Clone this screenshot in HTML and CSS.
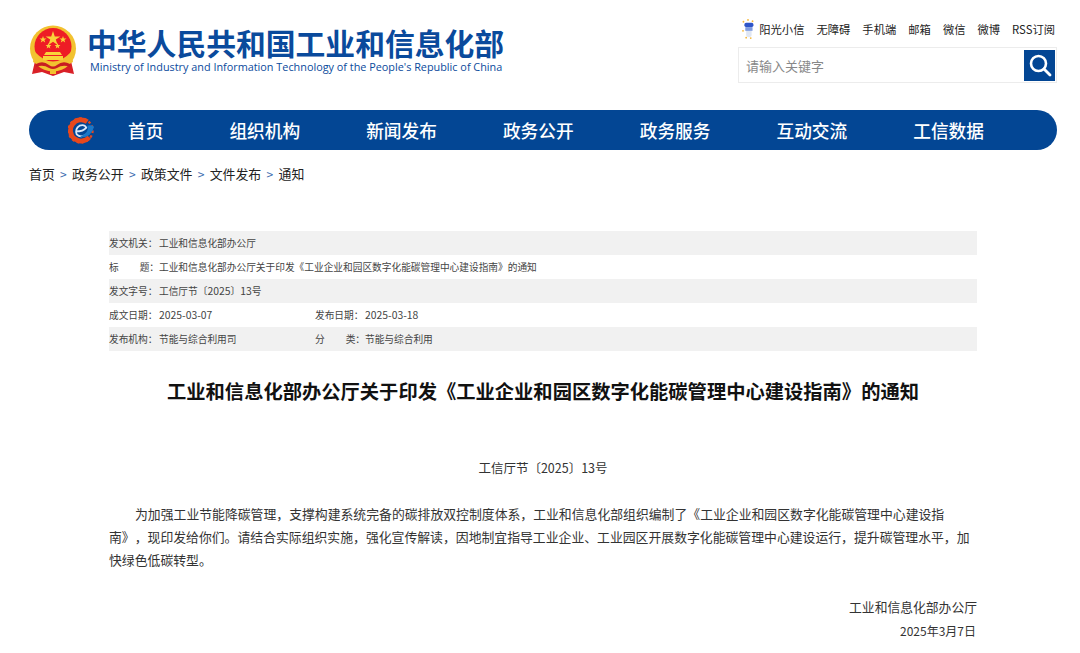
FILE: index.html
```html
<!DOCTYPE html>
<html lang="zh-CN">
<head>
<meta charset="utf-8">
<title>工业和信息化部办公厅关于印发《工业企业和园区数字化能碳管理中心建设指南》的通知</title>
<link rel="stylesheet" href="styles.css">
</head>
<body>
<header class="top">
  <div class="brand">
    <svg class="emblem" viewBox="0 0 48 52" width="48" height="52" aria-hidden="true">
      <path d="M6 36 L3 49 L13 47 L24 51 L35 47 L45 49 L42 36 Z" fill="#d92027"/>
      <circle cx="24" cy="23.5" r="23" fill="#f2c230"/>
      <circle cx="24" cy="21.5" r="18.5" fill="#ee1c25"/>
      <path d="M6 27 Q24 46 42 27 L44 37 Q24 49 4 37 Z" fill="#f2c230"/>
      <polygon fill="#f9d33a" points="24,6 25.8,11.4 31.4,11.4 26.8,14.6 28.6,20 24,16.7 19.4,20 21.2,14.6 16.6,11.4 22.2,11.4"/>
      <polygon fill="#f9d33a" points="14,11 14.9,13.4 17.5,13.5 15.4,15 16.2,17.5 14,16 11.8,17.5 12.6,15 10.5,13.5 13.1,13.4"/>
      <polygon fill="#f9d33a" points="34,11 34.9,13.4 37.5,13.5 35.4,15 36.2,17.5 34,16 31.8,17.5 32.6,15 30.5,13.5 33.1,13.4"/>
      <polygon fill="#f9d33a" points="19.5,18 20.3,20 22.4,20.1 20.8,21.4 21.3,23.5 19.5,22.3 17.7,23.5 18.2,21.4 16.6,20.1 18.7,20"/>
      <polygon fill="#f9d33a" points="28.5,18 29.3,20 31.4,20.1 29.8,21.4 30.3,23.5 28.5,22.3 26.7,23.5 27.2,21.4 25.6,20.1 27.7,20"/>
      <path d="M17 27 H31 L33 30 H15 Z M14 31 H34 V35 H14 Z" fill="#f9d33a"/>
      <path d="M7 39 Q14 35 20 40 Q24 43 28 40 Q34 35 41 39 L41 42 Q34 39 28 43 Q24 45 20 43 Q14 39 7 42 Z" fill="#c81d22"/>
      <rect x="21" y="44" width="6" height="5" fill="#f2c230"/>
    </svg>
    <div class="brand-text">
      <div class="brand-cn">中华人民共和国工业和信息化部</div>
      <div class="brand-en">Ministry of Industry and Information Technology of the People's Republic of China</div>
    </div>
  </div>
  <div class="tools">
    <ul class="links">
      <li class="sun">
        <svg viewBox="0 0 14 22" width="14" height="20" aria-hidden="true">
          <rect x="5" y="5" width="6" height="15" rx="3" fill="#dfe6f3"/>
          <rect x="3" y="4" width="10" height="5" rx="2" fill="#2f55c8"/>
          <path d="M4 9 H12 V13 H4 Z" fill="#7f9be0"/>
          <circle cx="2" cy="3" r="1" fill="#f5b73a"/>
          <circle cx="7" cy="1" r="1" fill="#f5b73a"/>
          <circle cx="12" cy="2.5" r="1" fill="#f5b73a"/>
          <circle cx="1.5" cy="13" r="1" fill="#f5b73a"/>
          <circle cx="5" cy="20.5" r="1" fill="#f5b73a"/>
          <circle cx="10" cy="21" r="1" fill="#f5b73a"/>
        </svg>
        <a>阳光小信</a>
      </li>
      <li><a>无障碍</a></li>
      <li><a>手机端</a></li>
      <li><a>邮箱</a></li>
      <li><a>微信</a></li>
      <li><a>微博</a></li>
      <li><a>RSS订阅</a></li>
    </ul>
    <div class="search">
      <span class="placeholder">请输入关键字</span>
      <span class="search-btn">
        <svg viewBox="0 0 24 24" width="24" height="24" aria-hidden="true">
          <circle cx="10.5" cy="10.5" r="7.5" fill="none" stroke="#fff" stroke-width="2.6"/>
          <path d="M16 16 L22 22" stroke="#fff" stroke-width="2.8" stroke-linecap="round"/>
        </svg>
      </span>
    </div>
  </div>
</header>

<nav class="nav">
  <svg class="nav-logo" viewBox="0 0 28 28" width="27" height="27" aria-hidden="true">
    <path d="M20 5 A11 11 0 1 0 22 21" fill="none" stroke="#e8481c" stroke-width="5"/>
    <circle cx="13" cy="14" r="12.5" fill="none" stroke="#e8481c" stroke-width="2.4" stroke-dasharray="2.6 2.6"/>
    <path d="M8 15 Q16 15 19 11 Q17 7 12 9 Q7 12 9 18 Q13 22 20 18" fill="none" stroke="#dbe8f8" stroke-width="1.8"/>
    <path d="M12 21 Q24 22 27 10 Q24 8 20 9 Q23 15 12 21 Z" fill="#1a78c8"/>
  </svg>
  <a>首页</a>
  <a>组织机构</a>
  <a>新闻发布</a>
  <a>政务公开</a>
  <a>政务服务</a>
  <a>互动交流</a>
  <a>工信数据</a>
</nav>

<div class="crumbs">
  <a>首页</a><i>&gt;</i><a>政务公开</a><i>&gt;</i><a>政策文件</a><i>&gt;</i><a>文件发布</a><i>&gt;</i><a>通知</a>
</div>

<main class="doc">
  <div class="meta">
    <div class="row"><span class="cell wide"><b>发文机关：</b>工业和信息化部办公厅</span></div>
    <div class="row"><span class="cell wide"><b class="spread"><em>标</em><em>题：</em></b>工业和信息化部办公厅关于印发《工业企业和园区数字化能碳管理中心建设指南》的通知</span></div>
    <div class="row"><span class="cell wide"><b>发文字号：</b><span>工信厅节〔<span class="num">2025</span>〕<span class="num">13</span>号</span></span></div>
    <div class="row"><span class="cell"><b>成文日期：</b><span class="num">2025-03-07</span></span><span class="cell"><b>发布日期：</b><span class="num">2025-03-18</span></span></div>
    <div class="row"><span class="cell"><b>发布机构：</b>节能与综合利用司</span><span class="cell"><b class="spread"><em>分</em><em>类：</em></b>节能与综合利用</span></div>
  </div>
  <h1 class="title">工业和信息化部办公厅关于印发《工业企业和园区数字化能碳管理中心建设指南》的通知</h1>
  <p class="docno">工信厅节〔2025〕13号</p>
  <p class="body">为加强工业节能降碳管理，支撑构建系统完备的碳排放双控制度体系，工业和信息化部组织编制了《工业企业和园区数字化能碳管理中心建设指南》，现印发给你们。请结合实际组织实施，强化宣传解读，因地制宜指导工业企业、工业园区开展数字化能碳管理中心建设运行，提升碳管理水平，加快绿色低碳转型。</p>
  <p class="sign">工业和信息化部办公厅</p>
  <p class="date">2025年3月7日</p>
</main>
</body>
</html>
```
FILE: styles.css
```css
* { box-sizing: border-box; }
html, body { margin: 0; padding: 0; }
body {
  width: 1080px;
  height: 653px;
  overflow: hidden;
  background: #fff;
  color: #222;
  font-family: "Noto Sans CJK SC", "Noto Sans", sans-serif;
}
.top {
  display: flex;
  justify-content: space-between;
  height: 110px;
  padding: 19px 25px 0 29px;
}
.brand { display: flex; align-items: flex-start; padding-top: 6px; }
.emblem { flex: none; }
.brand-text { margin-left: 10px; }
.brand-cn {
  height: 34px;
  font-size: 29.8px;
  line-height: 34px;
  font-weight: 700;
  color: #0a4a9c;
  white-space: nowrap;
}
.brand-en {
  margin: 0 0 0 3px;
  font-family: "Open Sans", "Noto Sans", sans-serif;
  font-size: 10.85px;
  line-height: 16px;
  color: #0a4a9c;
  white-space: nowrap;
}
.tools { display: flex; flex-direction: column; align-items: flex-end; }
.links {
  display: flex;
  align-items: center;
  gap: 12px;
  margin: 0;
  padding: 0;
  height: 20px;
  list-style: none;
  font-size: 11.3px;
  line-height: 20px;
  color: #222;
}
.links li { display: flex; align-items: center; white-space: nowrap; }
.sun svg { margin-right: 4px; }
.search {
  display: flex;
  justify-content: space-between;
  align-items: center;
  width: 319px;
  height: 36px;
  margin: 8px -2px 0 0;
  padding: 0 1px 0 7px;
  border: 1px solid #ececec;
}
.placeholder { font-size: 13px; color: #888; }
.search-btn {
  display: flex;
  align-items: center;
  justify-content: center;
  width: 31px;
  height: 31px;
  background: #034694;
}
.nav {
  display: flex;
  align-items: center;
  gap: 66px;
  width: 1028px;
  height: 40px;
  margin-left: 29px;
  padding-left: 39px;
  border-radius: 20px;
  background: #034694;
  color: #fff;
  font-size: 17.7px;
  font-weight: 500;
  white-space: nowrap;
}
.nav-logo { margin-right: -33px; }
.crumbs {
  display: flex;
  align-items: center;
  height: 20px;
  margin: 13px 0 0 29px;
  font-size: 12.9px;
  color: #222;
}
.crumbs i {
  margin: 0 5.3px;
  font-style: normal;
  font-size: 12px;
  color: #3c6db0;
}
.doc { width: 868px; margin: 48px 0 0 109px; }
.meta { font-size: 9.7px; color: #444; }
.row { display: flex; height: 24px; align-items: center; }
.row:nth-child(odd) { background: #f1f1f1; }
.cell { display: flex; align-items: center; width: 206px; height: 14px; line-height: 14px; white-space: nowrap; }
.cell.wide { width: auto; }
.cell b { width: 50px; font-weight: 400; flex: none; }
.cell b.spread { display: flex; justify-content: space-between; }
.cell b.spread em { font-style: normal; }
.num { font-size: 10.4px; line-height: 1; }
.title {
  margin: 28px 0 0;
  font-size: 19.3px;
  line-height: 24px;
  font-weight: 700;
  text-align: center;
  color: #111;
  white-space: nowrap;
}
.docno {
  margin: 55px 0 0;
  font-size: 12.5px;
  line-height: 20px;
  text-align: center;
  color: #333;
}
.body {
  margin: 24px 0 0;
  font-size: 12.85px;
  line-height: 23px;
  text-indent: 26px;
  text-spacing-trim: space-all;
  color: #333;
}
.sign, .date {
  margin: 0;
  line-height: 24px;
  text-align: right;
  color: #333;
}
.sign { margin-top: 24px; font-size: 12.8px; }
.date { padding-right: 1px; font-size: 12px; }
```
